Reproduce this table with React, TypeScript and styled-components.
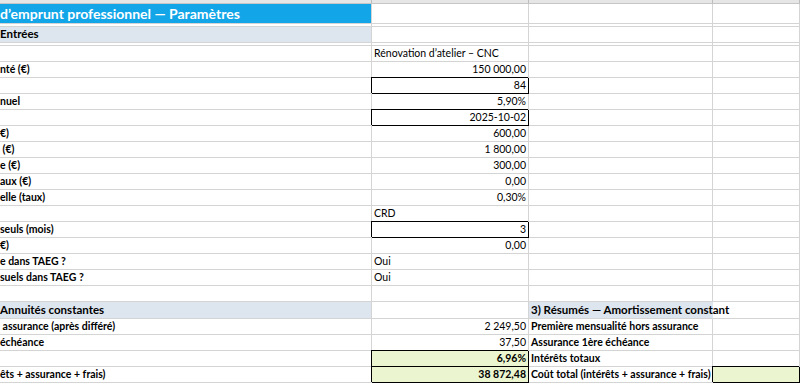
import styled, { createGlobalStyle } from "styled-components";

const Global = createGlobalStyle`
  html, body {
    margin: 0;
    padding: 0;
    background: #ffffff;
  }
  body {
    font-family: Lato, "Liberation Sans", Arial, sans-serif;
    color: #000000;
  }
`;

const GRID = "#d4d4d4";
const BAND = "#dde5ee";
const GREEN = "#ebf6d0";

const Sheet = styled.div`
  width: 800px;
  height: 383px;
  overflow: hidden;
  background: #ffffff;
`;

const Row = styled.div<{ $h: number }>`
  display: grid;
  grid-template-columns: 372px 157px 184px 1fr;
  height: ${(p) => p.$h}px;
`;

const HeadStrip = styled.div`
  box-sizing: border-box;
  height: 4px;
  background: #e6e6e6;
  border-right: 1px solid #bdbdbd;
  border-bottom: 1px solid #c6c6c6;
`;

type CellProps = {
  $align?: "left" | "right";
  $bold?: boolean;
  $bg?: string;
  $box?: boolean;
  $open?: boolean;
  $size?: number;
  $color?: string;
};

const Cell = styled.div<CellProps>`
  box-sizing: border-box;
  display: flex;
  align-items: flex-end;
  justify-content: ${(p) => (p.$align === "right" ? "flex-end" : "flex-start")};
  padding: 0 2px 1px 2px;
  white-space: pre;
  font-size: ${(p) => p.$size ?? 10.5}px;
  line-height: 14px;
  font-weight: ${(p) => (p.$bold ? 700 : 400)};
  color: ${(p) => p.$color ?? "#000000"};
  background: ${(p) => p.$bg ?? "transparent"};
  border-right: 1px solid ${(p) => (p.$box ? "#000" : p.$open ? "transparent" : GRID)};
  border-bottom: 1px solid ${(p) => (p.$box ? "#000" : GRID)};
  box-shadow: ${(p) => (p.$box ? "-1px -1px 0 0 #000" : "none")};
  min-width: 0;
`;

const Label = styled(Cell)`
  padding-left: 0;
`;

const Title = styled(Label)`
  align-items: center;
  padding-bottom: 0;
  line-height: 19px;
`;

type Line = {
  a?: string;
  b?: string;
  bLeft?: boolean;
  bBox?: boolean;
  bGreen?: boolean;
  c?: string;
  dGreen?: boolean;
};

const lines: Line[] = [
  { b: "Rénovation d’atelier – CNC", bLeft: true },
  { a: "nté (€)", b: "150 000,00" },
  { b: "84", bBox: true },
  { a: "nuel", b: "5,90%" },
  { b: "2025-10-02", bBox: true },
  { a: "€)", b: "600,00" },
  { a: " (€)", b: "1 800,00" },
  { a: "e (€)", b: "300,00" },
  { a: "aux (€)", b: "0,00" },
  { a: "elle (taux)", b: "0,30%" },
  { b: "CRD", bLeft: true },
  { a: "seuls (mois)", b: "3", bBox: true },
  { a: "€)", b: "0,00" },
  { a: "e dans TAEG ?", b: "Oui", bLeft: true },
  { a: "suels dans TAEG ?", b: "Oui", bLeft: true },
  {},
];

const results: Line[] = [
  { a: " assurance (après différé)", b: "2 249,50", c: "Première mensualité hors assurance" },
  { a: "échéance", b: "37,50", c: "Assurance 1ère échéance" },
  { b: "6,96%", bBox: true, bGreen: true, c: "Intérêts totaux" },
  {
    a: "êts + assurance + frais)",
    b: "38 872,48",
    bBox: true,
    bGreen: true,
    c: "Coût total (intérêts + assurance + frais)",
    dGreen: true,
  },
];

function Spacer() {
  return (
    <Row $h={3}>
      <Cell />
      <Cell />
      <Cell />
      <Cell />
    </Row>
  );
}

export default function App() {
  return (
    <Sheet>
      <Global />
      <Row $h={4}>
        <HeadStrip />
        <HeadStrip />
        <HeadStrip />
        <HeadStrip />
      </Row>

      <Row $h={20}>
        <Title $bold $bg="#12a6e8" $color="#ffffff" $size={14}>
          d’emprunt professionnel — Paramètres
        </Title>
        <Cell />
        <Cell />
        <Cell />
      </Row>
      <Spacer />
      <Row $h={16}>
        <Label $bold $bg={BAND} $size={11.5}>
          Entrées
        </Label>
        <Cell />
        <Cell />
        <Cell />
      </Row>
      <Spacer />

      {lines.map((l, i) => (
        <Row $h={16} key={i}>
          <Label $bold>{l.a}</Label>
          <Cell $align={l.bLeft ? "left" : "right"} $box={l.bBox}>
            {l.b}
          </Cell>
          <Cell />
          <Cell />
        </Row>
      ))}

      <Row $h={17}>
        <Label $bold $bg={BAND} $size={11.5}>
          Annuités constantes
        </Label>
        <Cell />
        <Cell $bold $bg={BAND} $size={11.5} $open>
          3) Résumés — Amortissement constant
        </Cell>
        <Cell />
      </Row>

      {results.map((l, i) => (
        <Row $h={16} key={i}>
          <Label $bold>{l.a}</Label>
          <Cell
            $align="right"
            $box={l.bBox}
            $bold={l.bGreen}
            $bg={l.bGreen ? GREEN : undefined}
          >
            {l.b}
          </Cell>
          <Cell $bold>{l.c}</Cell>
          <Cell $box={l.dGreen} $bg={l.dGreen ? GREEN : undefined} />
        </Row>
      ))}
    </Sheet>
  );
}
